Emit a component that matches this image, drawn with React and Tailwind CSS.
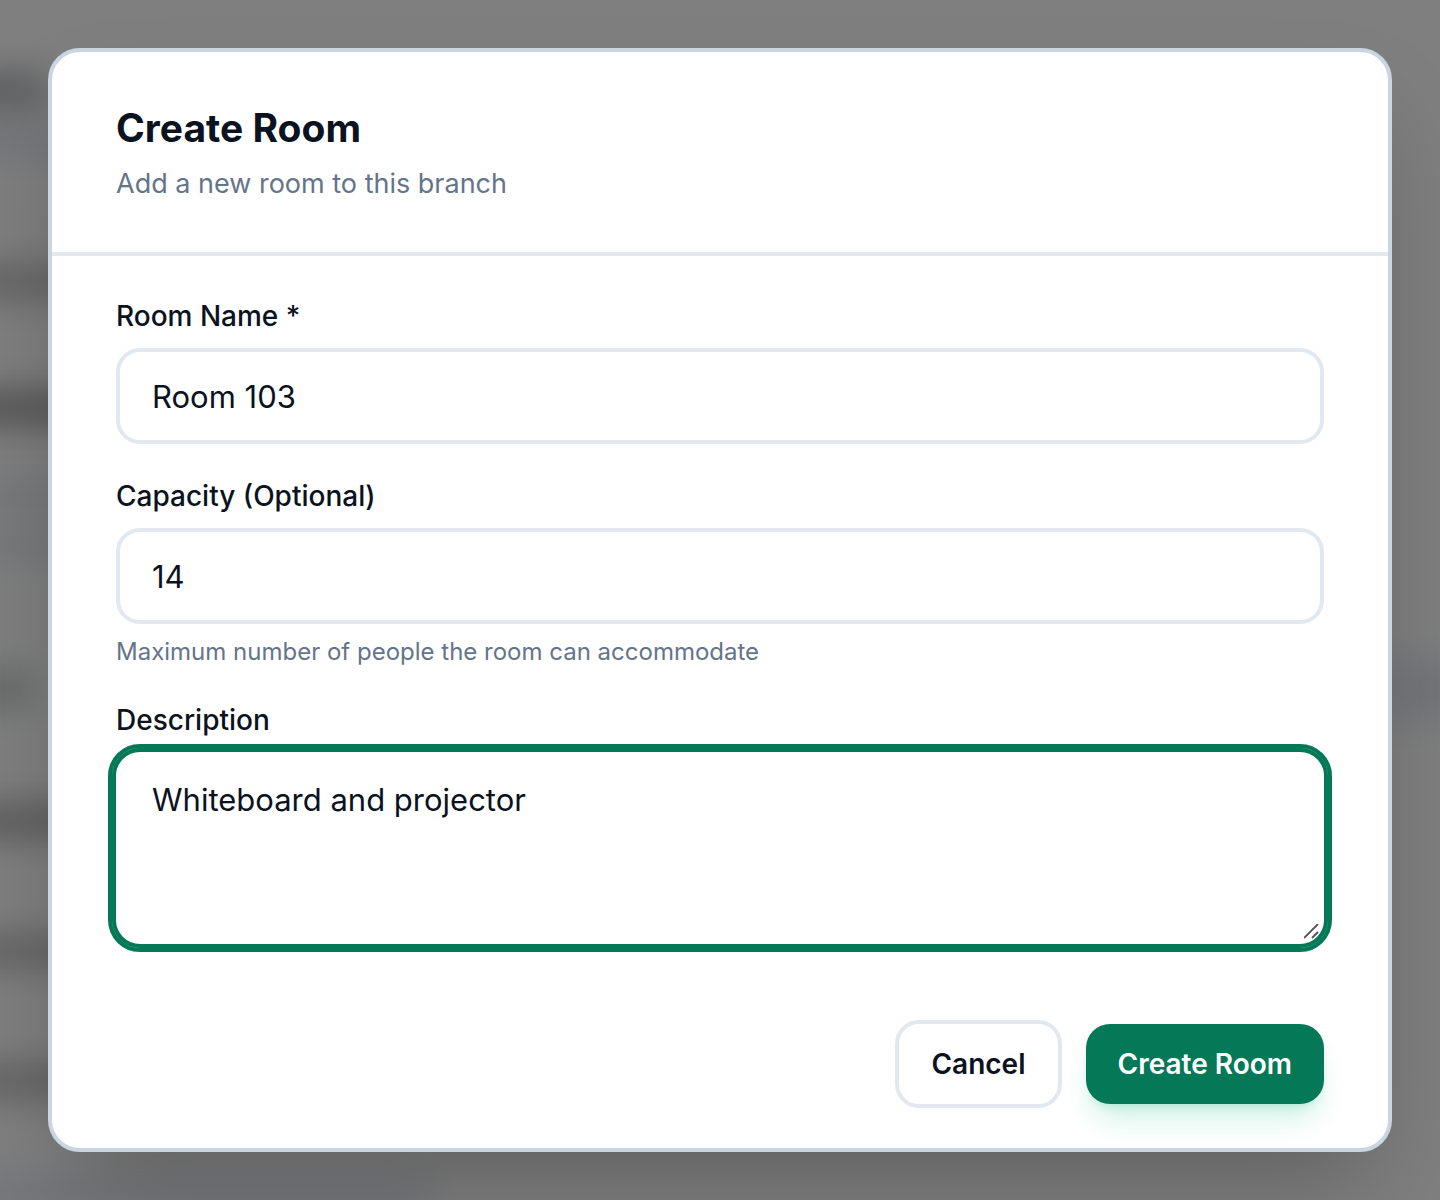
import { useState } from 'react'

const labelClasses = 'block text-[28px] leading-10 font-medium text-[#0b1220]'
const fieldClasses =
  'block w-full rounded-3xl border-4 border-[#e2e8f0] bg-white px-8 text-[31px] leading-12 text-[#0b1220] outline-none'

// blurred rows of the page behind the dialog
const backdropRows = [
  'mt-[76px] h-7 w-24 bg-[#a3a7aa]',
  'mt-5 h-8 w-40 bg-slate-200',
  'mt-28 h-7 w-40 bg-[#b8b8b8]',
  'mt-[98px] h-7 w-40 bg-[#929292]',
  'mt-[62px] h-6 w-40 bg-slate-200',
  'mt-[26px] h-6 w-40 bg-slate-200',
  'mt-[115px] h-8 w-20 bg-[#bccac6]',
  'mt-[102px] h-7 w-40 bg-[#a6a6a6]',
  'mt-[102px] h-7 w-40 bg-[#b8b8b8]',
  'mt-[102px] h-7 w-40 bg-[#b8b8b8]',
  'mt-[84px] h-8 w-[480px] bg-slate-200',
]

function Backdrop() {
  return (
    <div aria-hidden="true" className="absolute inset-0 overflow-hidden bg-white">
      <div className="-mx-12 flex items-start justify-between">
        <div className="flex flex-col items-start blur-[18px]">
          {backdropRows.map((row, index) => (
            <div key={index} className={`shrink-0 ${row}`} />
          ))}
        </div>
        <div className="mt-[662px] h-14 w-28 bg-slate-200 blur-[20px]" />
      </div>
      <div className="absolute inset-0 bg-black/50" />
    </div>
  )
}

export default function App() {
  const [name, setName] = useState('Room 103')
  const [capacity, setCapacity] = useState('14')
  const [description, setDescription] = useState('Whiteboard and projector')

  return (
    <div className="relative min-h-screen overflow-hidden p-12 font-[Inter,sans-serif]">
      <Backdrop />
      <div
        role="dialog"
        aria-modal="true"
        aria-labelledby="dialog-title"
        className="relative rounded-[32px] border-4 border-[#cbd5e1] bg-white shadow-[0_50px_100px_-24px_rgba(0,0,0,0.25)]"
      >
        <div className="border-b-4 border-[#e2e8f0] px-16 py-12">
          <h2 id="dialog-title" className="text-[39px] leading-14 font-bold text-[#0b1220]">
            Create Room
          </h2>
          <p className="mt-2 text-[27px] leading-10 text-[#64748b]">Add a new room to this branch</p>
        </div>

        <form onSubmit={(e) => e.preventDefault()} className="px-16 py-10">
          <div className="space-y-8">
            <div className="space-y-3">
              <label htmlFor="room-name" className={labelClasses}>
                Room Name *
              </label>
              <input
                id="room-name"
                type="text"
                required
                value={name}
                onChange={(e) => setName(e.target.value)}
                className={`h-24 ${fieldClasses}`}
              />
            </div>

            <div className="space-y-3">
              <label htmlFor="capacity" className={labelClasses}>
                Capacity (Optional)
              </label>
              <input
                id="capacity"
                type="text"
                inputMode="numeric"
                value={capacity}
                onChange={(e) => setCapacity(e.target.value)}
                className={`h-24 ${fieldClasses}`}
              />
              <p className="text-2xl leading-8 text-[#64748b]">Maximum number of people the room can accommodate</p>
            </div>

            <div className="space-y-3">
              <label htmlFor="description" className={labelClasses}>
                Description
              </label>
              <div className="relative">
                <textarea
                  id="description"
                  value={description}
                  onChange={(e) => setDescription(e.target.value)}
                  className="block h-48 w-full resize-none rounded-3xl border-4 border-white bg-white px-8 py-5 text-[31px] leading-12 text-[#0b1220] shadow-[0_0_0_4px_#047857,0_0_0_6px_#04785799] outline-4 outline-offset-4 outline-[#047857]"
                />
                <svg
                  aria-hidden="true"
                  viewBox="0 0 16 16"
                  className="pointer-events-none absolute right-1 bottom-1 size-4 text-neutral-600"
                  fill="none"
                  stroke="currentColor"
                  strokeWidth="1.8"
                >
                  <path d="M0 14 14 0M8 14l6-6" />
                </svg>
              </div>
            </div>
          </div>

          <div className="flex items-center justify-end gap-6 pt-[76px]">
            <button
              type="button"
              className="h-22 rounded-3xl border-4 border-[#e2e8f0] bg-white px-8 text-[28px] leading-10 font-semibold text-[#0b1220]"
            >
              Cancel
            </button>
            <button
              type="submit"
              className="h-20 rounded-3xl bg-[#047857] px-8 text-[28px] leading-10 font-semibold text-white shadow-[0_20px_30px_-6px_rgba(16,185,129,0.2),0_8px_12px_-8px_rgba(16,185,129,0.3)]"
            >
              Create Room
            </button>
          </div>
        </form>
      </div>
    </div>
  )
}
